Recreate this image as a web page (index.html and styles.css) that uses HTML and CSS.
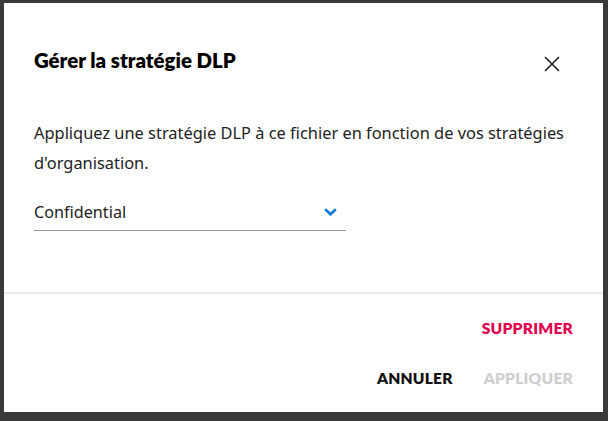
FILE: index.html
```html
<!DOCTYPE html>
<html lang="fr">
<head>
<meta charset="utf-8">
<title>Gérer la stratégie DLP</title>
<link rel="stylesheet" href="styles.css">
</head>
<body>
<div class="dialog">
  <div class="header">
    <h1 class="title">Gérer la stratégie DLP</h1>
    <button class="close" aria-label="Fermer">
      <svg width="16" height="16" viewBox="0 0 16 16"><path d="M1 1L15 15M15 1L1 15" stroke="#222" stroke-width="1.6" fill="none"/></svg>
    </button>
  </div>
  <div class="body">
    <p class="desc">Appliquez une stratégie DLP à ce fichier en fonction de vos stratégies d'organisation.</p>
    <div class="select">
      <span class="value">Confidential</span>
      <svg class="chev" width="13" height="8" viewBox="0 0 13 8"><path d="M1.2 1.3L6.5 6.3L11.8 1.3" stroke="#0a7ad6" stroke-width="2.6" fill="none"/></svg>
    </div>
  </div>
  <div class="divider"></div>
  <div class="footer">
    <div class="row"><button class="btn danger">SUPPRIMER</button></div>
    <div class="row">
      <button class="btn">ANNULER</button>
      <button class="btn disabled">APPLIQUER</button>
    </div>
  </div>
</div>
</body>
</html>
```
FILE: styles.css
```css
html, body {
  margin: 0;
  padding: 0;
  background: #3a3a3a;
  height: 100%;
}
body {
  padding: 3px 4px;
  box-sizing: border-box;
  font-family: "Noto Sans", "Open Sans", sans-serif;
}
.dialog {
  width: 599px;
  height: 409px;
  background: #fff;
  display: flex;
  flex-direction: column;
}
.header {
  display: flex;
  align-items: center;
  justify-content: space-between;
  padding: 40px 43px 0 30px;
  height: 34px;
}
.title {
  margin: 0;
  font-family: "Lato", sans-serif;
  font-weight: 800;
  font-size: 20.4px;
  color: #000;
}
.close {
  border: 0;
  background: none;
  padding: 0;
  margin-top: 8px;
  width: 16px;
  height: 16px;
  display: flex;
}
.body {
  padding: 41px 30px 0 30px;
}
.desc {
  margin: 0;
  font-size: 16.4px;
  line-height: 30px;
  color: #222;
  width: 545px;
}
.select {
  margin-top: 18px;
  width: 312px;
  height: 35px;
  border-bottom: 1px solid #9a9a9a;
  display: flex;
  align-items: center;
  justify-content: space-between;
  box-sizing: border-box;
  padding: 0 9px 2px 0;
}
.value {
  font-size: 16.2px;
  color: #222;
}
.divider {
  margin-top: 61px;
  height: 2px;
  background: #ececec;
}
.footer {
  padding: 24px 30px 0 30px;
  display: flex;
  flex-direction: column;
  gap: 30px;
}
.row {
  display: flex;
  justify-content: flex-end;
  gap: 31px;
}
.btn {
  border: 0;
  background: none;
  padding: 0;
  font-family: "Lato", sans-serif;
  font-weight: 800;
  font-size: 15.6px;
  line-height: 20px;
  color: #111;
  letter-spacing: 0.2px;
}
.btn.danger { color: #e3004f; }
.btn.disabled { color: #cfcfcf; }
```
